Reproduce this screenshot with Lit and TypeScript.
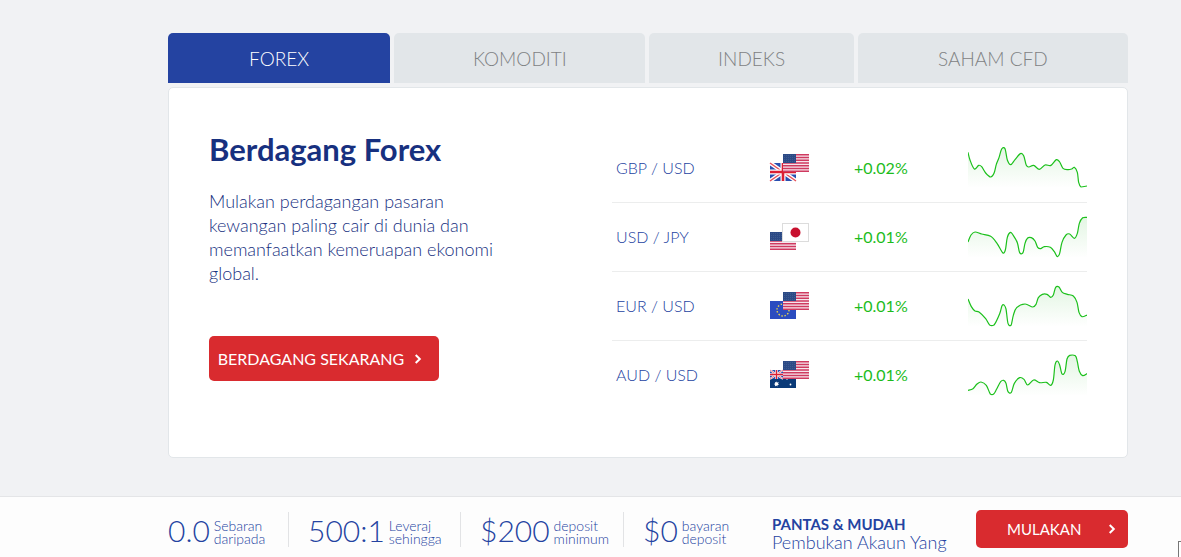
import { LitElement, html, css, svg } from "lit";
import { customElement, property, state } from "lit/decorators.js";
import { classMap } from "lit/directives/class-map.js";

type Point = [number, number];

interface Pair {
  name: string;
  front: string;
  back: string;
  change: string;
  points: Point[];
}

const PAIRS: Pair[] = [
  {
    name: "GBP / USD", front: "us", back: "gb", change: "+0.02%",
    points: [[0,19],[6,42],[19,69],[32,58],[41,62],[53,81],[68,93],[78,82],[85,55],[93,35],[101,9],[111,8],[118,42],[128,56],[141,41],[157,23],[167,29],[175,58],[183,63],[197,58],[214,70],[231,57],[249,58],[265,41],[275,48],[285,67],[299,71],[311,69],[319,64],[328,79],[332,109],[339,123],[357,120]],
  },
  {
    name: "USD / JPY", front: "jp", back: "us", change: "+0.01%",
    points: [[0,78],[9,57],[21,48],[41,54],[68,61],[87,82],[104,110],[112,102],[118,64],[127,49],[135,57],[148,80],[155,110],[165,110],[171,82],[179,66],[190,65],[201,75],[209,94],[218,98],[229,92],[247,94],[259,107],[268,122],[275,112],[282,79],[294,57],[305,54],[319,67],[328,52],[334,22],[344,5],[357,4]],
  },
  {
    name: "EUR / USD", front: "us", back: "eu", change: "+0.01%",
    points: [[0,42],[10,65],[21,78],[33,81],[53,101],[65,120],[78,120],[95,86],[102,62],[108,60],[114,72],[120,115],[129,121],[136,91],[146,68],[171,57],[194,66],[204,58],[211,38],[223,28],[237,28],[248,37],[256,30],[263,7],[273,6],[283,22],[298,28],[316,33],[327,52],[333,82],[342,95],[357,90]],
  },
  {
    name: "AUD / USD", front: "us", back: "au", change: "+0.01%",
    points: [[0,109],[15,104],[27,90],[39,84],[55,94],[67,120],[77,120],[86,105],[98,83],[107,79],[114,88],[120,113],[130,115],[139,88],[155,71],[168,76],[179,93],[197,78],[215,86],[235,85],[248,94],[256,78],[261,33],[268,21],[275,33],[282,60],[291,53],[297,15],[305,4],[322,5],[328,23],[334,52],[344,65],[357,59]],
  },
];

const TABS = ["FOREX", "KOMODITI", "INDEKS", "SAHAM CFD"];

const STATS = [
  { value: "0.0", top: "Sebaran", bottom: "daripada" },
  { value: "500:1", top: "Leveraj", bottom: "sehingga" },
  { value: "$200", top: "deposit", bottom: "minimum" },
  { value: "$0", top: "bayaran", bottom: "deposit" },
];

/** Smooth curve through all points, with control points clamped to the chart. */
function curve(points: Point[]): string {
  let d = `M${points[0][0]} ${points[0][1]}`;
  for (let i = 0; i < points.length - 1; i++) {
    const a = points[Math.max(i - 1, 0)];
    const b = points[i];
    const c = points[i + 1];
    const e = points[Math.min(i + 2, points.length - 1)];
    const clamp = (v: number) => Math.max(3, Math.min(123, v));
    d += `C${b[0] + (c[0] - a[0]) / 6} ${clamp(b[1] + (c[1] - a[1]) / 6)} ${c[0] - (e[0] - b[0]) / 6} ${clamp(c[1] - (e[1] - b[1]) / 6)} ${c[0]} ${c[1]}`;
  }
  return d;
}

const unionJack = svg`
  <rect width="26" height="18" fill="#2a4fb0"></rect>
  <path d="M0 0L26 18M26 0L0 18" stroke="#fff" stroke-width="4"></path>
  <path d="M0 0L26 18M26 0L0 18" stroke="#e8505a" stroke-width="1.5"></path>
  <path d="M13 0V18M0 9H26" stroke="#fff" stroke-width="5"></path>
  <path d="M13 0V18M0 9H26" stroke="#dc1f32" stroke-width="2.6"></path>`;

const FLAGS: Record<string, unknown> = {
  us: svg`
    <rect width="26" height="18" fill="#f6e6ec"></rect>
    <path d="M0 .7H26M0 3.5H26M0 6.2H26M0 9H26M0 11.8H26M0 14.5H26M0 17.3H26" stroke="#cf3a60" stroke-width="1.4"></path>
    <rect width="13" height="9" fill="#2c4a86"></rect>
    <path d="M1 1.5H12.5M1 3.5H12.5M1 5.5H12.5M1 7.5H12.5" stroke="#456393" stroke-width=".7" stroke-dasharray="1 1"></path>`,
  gb: unionJack,
  jp: svg`
    <rect x="-.5" y=".5" width="26" height="18" fill="#fff" stroke="#dcdcdc"></rect>
    <circle cx="12.5" cy="9.5" r="5" fill="#c8102e"></circle>`,
  eu: svg`
    <rect width="26" height="18" fill="#2b4cc0"></rect>
    <circle cx="13" cy="9" r="6" fill="none" stroke="#e8d44a" stroke-width="1.4" stroke-dasharray="1.4 1.74"></circle>`,
  au: svg`
    <rect width="26" height="18" fill="#0a3a78"></rect>
    <g transform="scale(.5)">${unionJack}</g>
    <path d="M6.5 11.2l.7 1.4 1.6-.3-.8 1.4 1.1 1.1-1.6.2-.1 1.6-1.2-1-1.3.8.2-1.6-1.4-.7 1.4-.7-.1-1.5 1.3.7z" fill="#fff"></path>
    <circle cx="20.5" cy="14.5" r=".9" fill="#fff"></circle>
    <circle cx="20.5" cy="4" r=".8" fill="#fff"></circle>
    <circle cx="17" cy="9" r=".8" fill="#fff"></circle>
    <circle cx="23.5" cy="8" r=".8" fill="#fff"></circle>`,
};

const chevron = html`<svg class="chevron" width="8" height="12" viewBox="0 0 8 12" aria-hidden="true">
  <path d="M1.7 2L5.8 6L1.7 10" fill="none" stroke="currentColor" stroke-width="2"></path>
</svg>`;

@customElement("pair-sparkline")
export class PairSparkline extends LitElement {
  @property({ attribute: false }) points: Point[] = [];

  static styles = css`
    :host { display: block; }
    .chart { display: block; width: 119px; height: 42px; }
  `;

  render() {
    const line = curve(this.points);
    return html`<svg class="chart" viewBox="0 0 357 126" aria-hidden="true">
      <defs>
        <linearGradient id="fade" x1="0" y1="0" x2="0" y2="126" gradientUnits="userSpaceOnUse">
          <stop offset="0" stop-color="#22b422" stop-opacity=".13"></stop>
          <stop offset="1" stop-color="#22b422" stop-opacity="0"></stop>
        </linearGradient>
      </defs>
      <path d="${line}V126H0Z" fill="url(#fade)"></path>
      <path d=${line} fill="none" stroke="#1cc01c" stroke-width="3.6" stroke-linejoin="round"></path>
    </svg>`;
  }
}

@customElement("app-root")
export class AppRoot extends LitElement {
  @state() private active = 0;

  static styles = css`
    :host {
      display: flex;
      flex-direction: column;
      min-height: 100vh;
      box-sizing: border-box;
      position: relative;
      overflow: hidden;
      background: #f1f2f4;
      color: #17307f;
      font-family: "Century Gothic", Lato, sans-serif;
      font-size: 16px;
      font-weight: 300;
    }
    *, *::before { box-sizing: border-box; }
    button, a { font: inherit; color: inherit; text-decoration: none; cursor: pointer; }
    .main { flex: 1; padding: 33px 53px 38px 168px; }
    .tabs { display: grid; grid-template-columns: 222fr 251fr 204fr 270fr; gap: 4px; }
    .tab {
      height: 50px;
      padding: 0;
      border: 0;
      border-radius: 5px 5px 0 0;
      background: #e2e6e9;
      color: #7f8284;
      font-size: 19px;
    }
    .tab.active { background: #2443a1; color: #fff; }
    .card {
      display: grid;
      grid-template-columns: 290px 475px;
      justify-content: space-between;
      margin-top: 4px;
      padding: 45px 40px 48px;
      border: 1px solid #e2e6e9;
      border-radius: 5px;
      background: #fff;
    }
    .title { margin: 0; font-size: 31px; line-height: 32px; font-weight: 700; }
    .text { margin: 24px 0 51px; font-size: 18px; line-height: 24px; }
    .cta {
      display: inline-flex;
      align-items: center;
      justify-content: center;
      border-radius: 5px;
      background: #d92b2f;
      color: #fff;
      font-weight: 400;
    }
    .trade { width: 230px; height: 45px; padding-right: 8px; gap: 10px; white-space: nowrap; }
    .pairs { width: 100%; border-collapse: collapse; table-layout: fixed; }
    .pairs td { height: 69px; padding: 0; border-bottom: 1px solid #eceded; vertical-align: middle; }
    .pairs tr:last-child td { border-bottom: 0; }
    .pairs .name { width: 157px; padding-left: 4px; color: #2443a1; }
    .pairs .flags { width: 85px; padding-top: 1px; }
    .pairs .change { width: 114px; color: #1cbc1c; font-weight: 400; }
    .flag-pair { display: block; }
    .bar {
      display: flex;
      align-items: flex-start;
      height: 61px;
      padding: 13px 53px 0 168px;
      border-top: 1px solid #e4e5e7;
      background: #fdfdfd;
      color: #2443a1;
    }
    .stats { display: grid; grid-template-columns: 120px 172px 163px 128px; margin: 2px 0 0; padding: 0; list-style: none; }
    .stat { display: flex; align-items: center; gap: 4px; height: 35px; padding-left: 19px; border-left: 1px solid #e2e3e5; }
    .stat:first-child { padding-left: 0; border-left: 0; }
    .value { font-size: 30px; line-height: 36px; }
    .label { padding-top: 4px; font-size: 14px; line-height: 13px; }
    .promo { flex: 1; margin: 0; padding: 5px 0 0 21px; font-size: 18px; line-height: 18px; white-space: nowrap; }
    .promo strong { display: block; font-size: 15px; font-weight: 700; }
    .start { width: 152px; height: 38px; padding: 0 12px 0 31px; justify-content: space-between; font-size: 15px; }
    .chat { position: absolute; right: -20px; bottom: -4px; width: 23px; height: 20px; border: 1px solid #777; background: #fff; }
  `;

  render() {
    return html`
      <main class="main">
        <div class="tabs" role="tablist">
          ${TABS.map((tab, i) => html`<button
            class=${classMap({ tab: true, active: i === this.active })}
            role="tab" aria-selected=${i === this.active ? "true" : "false"}
            @click=${() => (this.active = i)}>${tab}</button>`)}
        </div>
        <section class="card">
          <div>
            <h2 class="title">Berdagang Forex</h2>
            <p class="text">Mulakan perdagangan pasaran kewangan paling cair di dunia dan memanfaatkan kemeruapan ekonomi global.</p>
            <a class="cta trade" href="#">BERDAGANG SEKARANG ${chevron}</a>
          </div>
          <table class="pairs">
            <tbody>
              ${PAIRS.map((p) => html`<tr>
                <td class="name">${p.name}</td>
                <td class="flags"><svg class="flag-pair" width="41" height="28" viewBox="0 0 41 28" aria-hidden="true">
                  <g transform="translate(1 9)">${FLAGS[p.back]}</g>
                  <g transform="translate(14 0)">${FLAGS[p.front]}</g>
                </svg></td>
                <td class="change">${p.change}</td>
                <td><pair-sparkline .points=${p.points}></pair-sparkline></td>
              </tr>`)}
            </tbody>
          </table>
        </section>
      </main>
      <footer class="bar">
        <ul class="stats">
          ${STATS.map((s) => html`<li class="stat">
            <span class="value">${s.value}</span>
            <span class="label">${s.top}<br>${s.bottom}</span>
          </li>`)}
        </ul>
        <p class="promo"><strong>PANTAS &amp; MUDAH</strong>Pembukan Akaun Yang</p>
        <a class="cta start" href="#">MULAKAN ${chevron}</a>
      </footer>
      <div class="chat"></div>
    `;
  }
}
